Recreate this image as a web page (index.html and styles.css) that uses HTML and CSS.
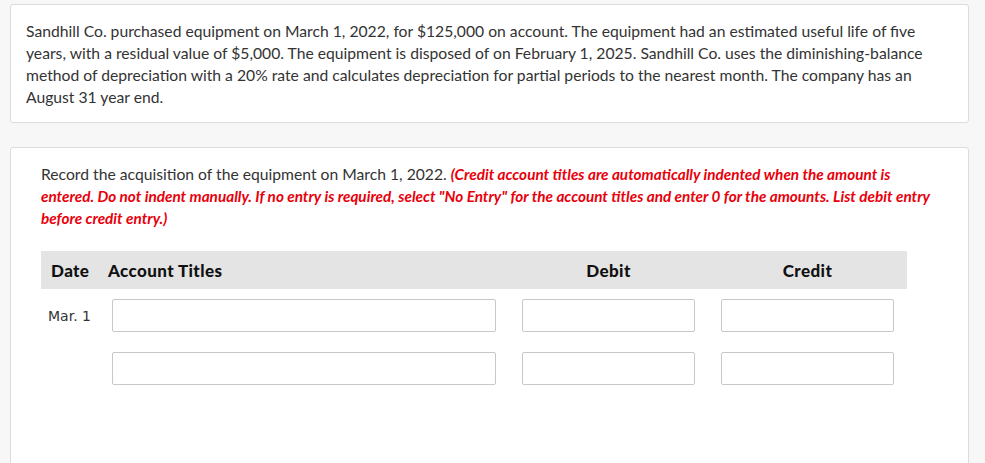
FILE: index.html
```html
<!DOCTYPE html>
<html>
<head>
<meta charset="utf-8">
<link rel="stylesheet" href="styles.css">
</head>
<body>
<div class="page">
  <div class="card card-intro">
    <p class="text">Sandhill Co. purchased equipment on March 1, 2022, for $125,000 on account. The equipment had an estimated useful life of five years, with a residual value of $5,000. The equipment is disposed of on February 1, 2025. Sandhill Co. uses the diminishing-balance method of depreciation with a 20% rate and calculates depreciation for partial periods to the nearest month. The company has an August 31 year end.</p>
  </div>
  <div class="card card-question">
    <p class="text">Record the acquisition of the equipment on March 1, 2022. <em class="note">(Credit account titles are automatically indented when the amount is entered. Do not indent manually. If no entry is required, select "No Entry" for the account titles and enter 0 for the amounts. List debit entry before credit entry.)</em></p>
    <div class="journal">
      <div class="jrow jhead">
        <div class="c-date">Date</div>
        <div class="c-acct">Account Titles</div>
        <div class="c-amt">Debit</div>
        <div class="c-amt">Credit</div>
      </div>
      <div class="jrow jbody">
        <div class="c-date date-val">Mar. 1</div>
        <div class="c-acct"><input class="field field-acct" type="text"></div>
        <div class="c-amt"><input class="field" type="text"></div>
        <div class="c-amt"><input class="field" type="text"></div>
      </div>
      <div class="jrow jbody">
        <div class="c-date date-val"></div>
        <div class="c-acct"><input class="field field-acct" type="text"></div>
        <div class="c-amt"><input class="field" type="text"></div>
        <div class="c-amt"><input class="field" type="text"></div>
      </div>
    </div>
  </div>
</div>
</body>
</html>
```
FILE: styles.css
```css
html, body {
  margin: 0;
  padding: 0;
  background: #f7f7f7;
  overflow: hidden;
}
.page {
  width: 959px;
  padding: 4px 0 0 10px;
  display: flex;
  flex-direction: column;
  gap: 24px;
  font-family: Lato, "Noto Sans", sans-serif;
  color: #333;
}
.card {
  background: #fff;
  border: 1px solid #dcdcdc;
  border-radius: 3px;
}
.card-intro {
  padding: 15px 15px 14px 15px;
}
.card-question {
  padding: 15px 28px 200px 30px;
}
.text {
  margin: 0;
  font-size: 15.7px;
  line-height: 22px;
}
.note {
  color: #e8000b;
  font-weight: 700;
  font-style: italic;
  font-size: 15.3px;
}
.journal {
  margin-top: 22px;
  width: 866px;
}
.jrow {
  display: grid;
  grid-template-columns: 71px 397px 199px 199px;
  align-items: center;
}
.jhead {
  background: #e4e4e4;
  height: 38px;
  font-weight: 900;
  font-size: 17px;
  letter-spacing: 0.4px;
  color: #111;
}
.jhead .c-date {
  padding-left: 10px;
}
.jhead .c-acct {
  margin-left: -4px;
}
.jhead .c-amt {
  text-align: center;
}
.jbody {
  margin-top: 10px;
  height: 33px;
}
.jbody + .jbody {
  margin-top: 20px;
}
.date-val {
  padding-left: 7px;
  font-family: "DejaVu Sans", Verdana, sans-serif;
  font-size: 14px;
  color: #333;
}
.c-amt {
  display: flex;
  justify-content: center;
}
.field {
  box-sizing: border-box;
  width: 173px;
  height: 33px;
  margin: 0;
  border: 1px solid #c8c8c8;
  border-radius: 2px;
  background: #fff;
  padding: 0 4px;
  font: inherit;
}
.field-acct {
  width: 384px;
  display: block;
}
```
